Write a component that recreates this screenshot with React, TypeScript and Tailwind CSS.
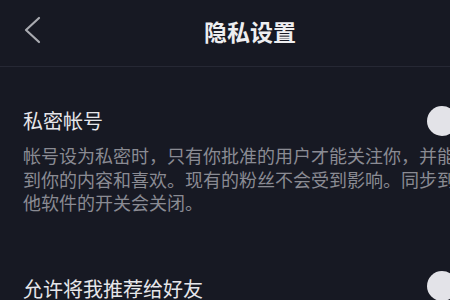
import React from "react";

const font = { fontFamily: '"Noto Sans CJK SC", "Noto Sans", sans-serif' };

function Knob() {
  return <div className="w-[30px] h-[30px] shrink-0 rounded-full bg-[#e3e3e8]" />;
}

export default function App() {
  return (
    <div className="w-[450px] h-[300px] overflow-hidden bg-[#171923]" style={font}>
      <div className="w-[500px]">
        <div className="flex h-[67px] items-center border-b border-[#262834] pb-[4px]">
          <div className="w-[80px] pl-[24px] flex items-center">
            <svg width="20" height="30" viewBox="0 0 20 30" fill="none">
              <polyline points="15,2 2,14 15,26" stroke="#a9aab0" strokeWidth="2.2" strokeLinecap="round" strokeLinejoin="round" />
            </svg>
          </div>
          <div className="flex-1 text-center text-[23px] font-bold leading-[30px] text-[#eeeef0]">隐私设置</div>
          <div className="w-[80px]" />
        </div>
        <div className="pl-[23px] pr-[43px] pt-[39px]">
          <div className="flex items-center justify-between">
            <div className="text-[20px] leading-[28px] text-[#e6e6ea] whitespace-nowrap">私密帐号</div>
            <Knob />
          </div>
          <div className="mt-[8px] text-[18px] leading-[23.5px] text-[#8a8b93] whitespace-nowrap w-[520px]">
            <div>帐号设为私密时，只有你批准的用户才能关注你，并能看</div>
            <div>到你的内容和喜欢。现有的粉丝不会受到影响。同步到其</div>
            <div>他软件的开关会关闭。</div>
          </div>
          <div className="mt-[60px] flex items-center justify-between">
            <div className="text-[20px] leading-[28px] text-[#e6e6ea] whitespace-nowrap">允许将我推荐给好友</div>
            <div className="-mt-[6px]"><Knob /></div>
          </div>
        </div>
      </div>
    </div>
  );
}
